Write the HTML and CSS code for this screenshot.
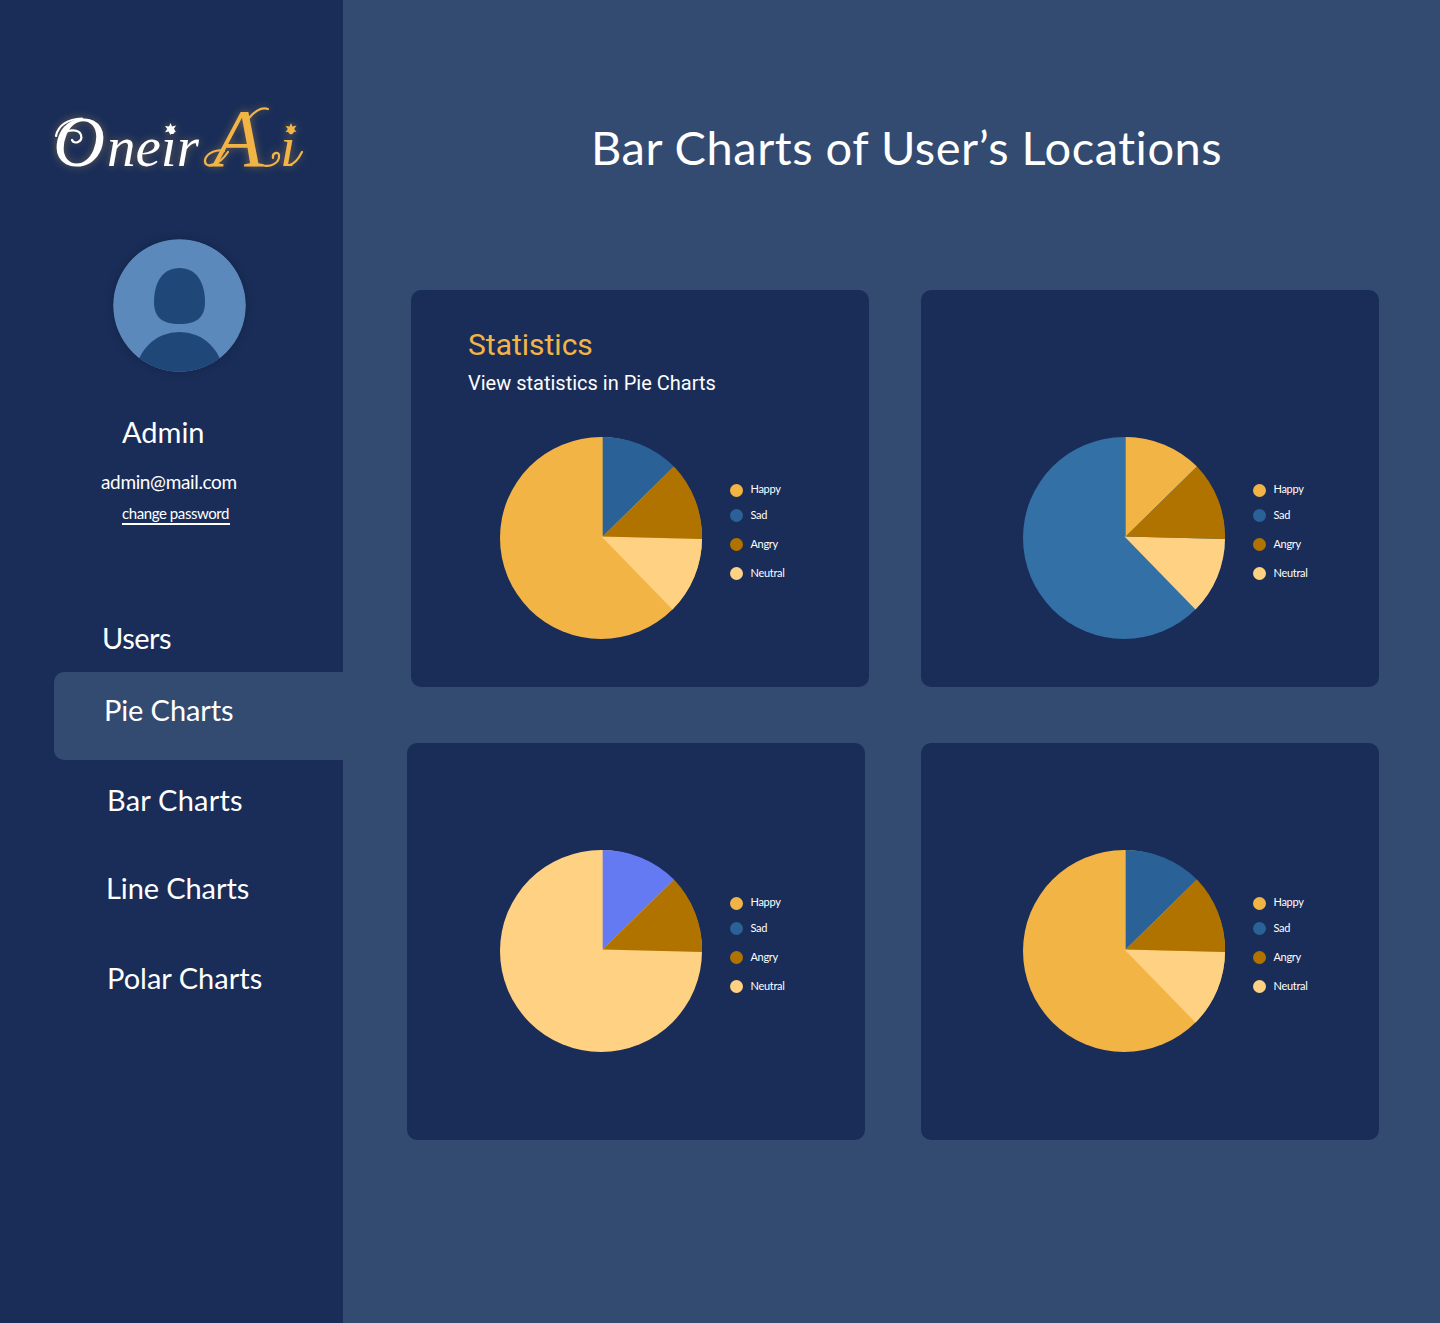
FILE: index.html
```html
<!DOCTYPE html>
<html lang="en">
<head>
<meta charset="utf-8">
<title>OneirAi – Pie Charts</title>
<link rel="stylesheet" href="styles.css">
</head>
<body>
<svg width="0" height="0" class="defs" aria-hidden="true">
  <defs>
    <path id="slice-a" d="M102.700 99.500V0A101 101 0 0 1 174 29.5Z"/>
    <path id="slice-b" d="M102.700 99.500L174 29.5A101 101 0 0 1 202 102Z"/>
    <path id="slice-c" d="M101.500 99.500L202 102A101 101 0 0 1 172.500 172.500Z"/>
  </defs>
</svg>
<div class="app">
  <aside class="sidebar">
    <svg class="logo" width="270" height="92" viewBox="44 92 270 92" role="img" aria-label="OneirAi">
      <text class="logo-main" y="166"><tspan x="53" class="logo-o">O</tspan><tspan x="107">neir</tspan></text>
      <text class="logo-accent" y="166"><tspan x="213" class="logo-a">A</tspan><tspan x="280">i</tspan></text>
      <path class="logo-swash white" d="M56 136C58 125 68 119 82 118.500"/>
      <path class="logo-swash white" d="M63 134C68 129 79 129 81 135C83 142 74 145 72 140"/>
      <path class="logo-swash gold" d="M228 152C218 167 204 169 205 160C207 152 218 149 224 151"/>
      <path class="logo-swash gold" d="M249 118C256 110 262 107 268 109"/>
      <path class="logo-swash gold" d="M262 165C270 168 280 163 279 155C278 151 272 153 273 158"/>
      <path class="logo-swash gold" d="M289 165C295 164 299 158 302 152"/>
      <path class="star white" d="M170.500 123l1.500 3.500 4-1-2.300 3.500 2.300 3-3.700-.5-1.800 3.500-1.500-3.500-4 .8 2.300-3.300-2.300-3 4 .5z"/>
      <path class="star gold" d="M291 123l1.500 3.500 4-1-2.300 3.500 2.300 3-3.700-.5-1.800 3.500-1.500-3.500-4 .8 2.300-3.300-2.300-3 4 .5z"/>
    </svg>
    <svg class="avatar" width="133" height="133" viewBox="0 0 133 133" aria-hidden="true">
      <defs><clipPath id="round"><circle cx="66.500" cy="66.500" r="66.300"/></clipPath></defs>
      <g clip-path="url(#round)">
        <rect width="133" height="133" fill="#5c89bb"/>
        <path d="M66.500 29C83 29 92 43 92 63C92 78 84 85 66.500 85S41 78 41 63C41 43 50 29 66.500 29Z" fill="#1f4878"/>
        <circle cx="66.500" cy="137" r="44" fill="#1f4878"/>
      </g>
    </svg>
    <div class="name">Admin</div>
    <div class="email">admin@mail.com</div>
    <a class="change">change password</a>
    <nav class="nav">
      <a class="users">Users</a>
      <a class="pie-link">Pie Charts</a>
      <a class="bar">Bar Charts</a>
      <a class="line">Line Charts</a>
      <a class="polar">Polar Charts</a>
    </nav>
  </aside>
  <main class="main">
    <h1>Bar Charts of User’s Locations</h1>
    <section class="cards">
      <article class="card first">
        <header><h2>Statistics</h2><p>View statistics in Pie Charts</p></header>
        <div class="chart">
          <svg class="pie" viewBox="0 0 202 202"><circle cx="101" cy="101" r="101" class="happy"/><use href="#slice-a" class="sad"/><use href="#slice-c" class="neutral"/><use href="#slice-b" class="angry"/></svg>
          <ul class="legend"><li class="happy"><span>Happy</span></li><li class="sad"><span>Sad</span></li><li class="angry"><span>Angry</span></li><li class="neutral"><span>Neutral</span></li></ul>
        </div>
      </article>
      <article class="card upper">
        <div class="chart">
          <svg class="pie" viewBox="0 0 202 202"><circle cx="101" cy="101" r="101" class="sea"/><use href="#slice-a" class="happy"/><use href="#slice-c" class="neutral"/><use href="#slice-b" class="angry"/></svg>
          <ul class="legend"><li class="happy"><span>Happy</span></li><li class="sad"><span>Sad</span></li><li class="angry"><span>Angry</span></li><li class="neutral"><span>Neutral</span></li></ul>
        </div>
      </article>
      <article class="card lower-left">
        <div class="chart">
          <svg class="pie" viewBox="0 0 202 202"><circle cx="101" cy="101" r="101" class="neutral"/><use href="#slice-a" class="violet"/><use href="#slice-b" class="angry"/></svg>
          <ul class="legend"><li class="happy"><span>Happy</span></li><li class="sad"><span>Sad</span></li><li class="angry"><span>Angry</span></li><li class="neutral"><span>Neutral</span></li></ul>
        </div>
      </article>
      <article class="card lower">
        <div class="chart">
          <svg class="pie" viewBox="0 0 202 202"><circle cx="101" cy="101" r="101" class="happy"/><use href="#slice-a" class="sad"/><use href="#slice-c" class="neutral"/><use href="#slice-b" class="angry"/></svg>
          <ul class="legend"><li class="happy"><span>Happy</span></li><li class="sad"><span>Sad</span></li><li class="angry"><span>Angry</span></li><li class="neutral"><span>Neutral</span></li></ul>
        </div>
      </article>
    </section>
  </main>
</div>
</body>
</html>
```
FILE: styles.css
```css
* { box-sizing: border-box; }
body { margin: 0; font-family: Lato, "Liberation Sans", sans-serif; color: #fff; background: #334b70; }
h1, h2, p, ul { margin: 0; padding: 0; font-weight: 400; }
.defs { display: block; }
.app { display: flex; height: 1323px; overflow: hidden; }

.sidebar { width: 343px; flex: none; background: #192d58; display: flex; flex-direction: column; align-items: flex-start; padding-top: 92px; }
.logo { margin-left: 44px; display: block; overflow: visible; filter: drop-shadow(0 0 4px rgba(243, 180, 70, .4)); }
.logo text { font-family: "Liberation Serif", serif; font-style: italic; font-size: 57px; }
.logo-main { fill: #fff; }
.logo-accent { fill: #f3b446; }
.logo .logo-o { font-size: 72px; }
.logo .logo-a { font-size: 82px; }
.logo-swash { fill: none; stroke-width: 2.2; stroke-linecap: round; }
.logo-swash.white { stroke: #fff; }
.logo-swash.gold { stroke: #f3b446; }
.star.white { fill: #fff; }
.star.gold { fill: #f3b446; }
.avatar { margin: 55px 0 0 113px; border-radius: 50%; box-shadow: 0 0 10px rgba(0, 0, 0, .18); }
.name { margin: 40px 0 0 122px; font-size: 29px; line-height: 40px; }
.email { margin: 18px 0 0 101px; font-size: 19px; line-height: 24px; letter-spacing: -.35px; }
.change { margin: 9px 0 0 122px; width: 108px; font-size: 15px; line-height: 20px; letter-spacing: -.42px; border-bottom: 2px solid #fff; white-space: nowrap; }
.nav { margin-top: 77px; align-self: stretch; display: flex; flex-direction: column; font-size: 29px; }
.nav a { display: flex; align-items: center; white-space: nowrap; }
.nav .users { height: 70px; padding: 0 0 0 102px; letter-spacing: -.5px; }
.nav .pie-link { height: 88px; margin-left: 54px; padding: 0 0 13px 50px; letter-spacing: -.1px; background: #334b70; border-radius: 10px 0 0 10px; }
.nav .bar { height: 80px; padding: 0 0 1px 107px; letter-spacing: .2px; }
.nav .line { height: 96px; padding: 0 0 1px 106px; letter-spacing: -.1px; }
.nav .polar { height: 84px; padding: 0 0 1px 107px; }

.main { flex: 1; padding: 117px 0 0 64px; }
h1 { margin-left: 184px; font-size: 47px; line-height: 60px; letter-spacing: .52px; white-space: nowrap; }
.cards { margin-top: 113px; display: grid; grid-template-columns: 458px 458px; grid-template-rows: 397px 397px; gap: 56px; }
.card { background: #192d58; border-radius: 10px; }
.first { width: 458px; margin-left: 4px; padding: 36px 0 0 89px; }
.first header { height: 111px; margin-left: -32px; font-family: Roboto, sans-serif; }
h2 { font-size: 30px; line-height: 38px; color: #f3b446; }
.first p { font-size: 20px; line-height: 38px; }
.upper { padding: 147px 0 0 102px; }
.lower-left { padding: 107px 0 0 93px; }
.lower { padding: 107px 0 0 102px; }
.chart { display: flex; gap: 28px; }
.pie { width: 202px; height: 202px; flex: none; }
.legend { list-style: none; padding: 47px 0 0 .3px; font-size: 11px; letter-spacing: -.3px; }
.legend li { display: flex; align-items: center; gap: 7.2px; height: 13px; line-height: 13px; margin-bottom: 16px; }
.legend li:first-child { margin-bottom: 12px; }
.legend li::before { content: ""; width: 13px; height: 13px; border-radius: 50%; background: currentColor; }
.legend span { color: #fff; padding-bottom: 2px; }
.legend li:first-child span { padding-bottom: 4px; }
.happy { fill: #f3b446; color: #f3b446; }
.sad { fill: #2a6196; color: #2a6196; }
.angry { fill: #b07300; color: #b07300; }
.neutral { fill: #ffd182; color: #ffd182; }
.sea { fill: #3370a6; }
.violet { fill: #637af2; }
```
